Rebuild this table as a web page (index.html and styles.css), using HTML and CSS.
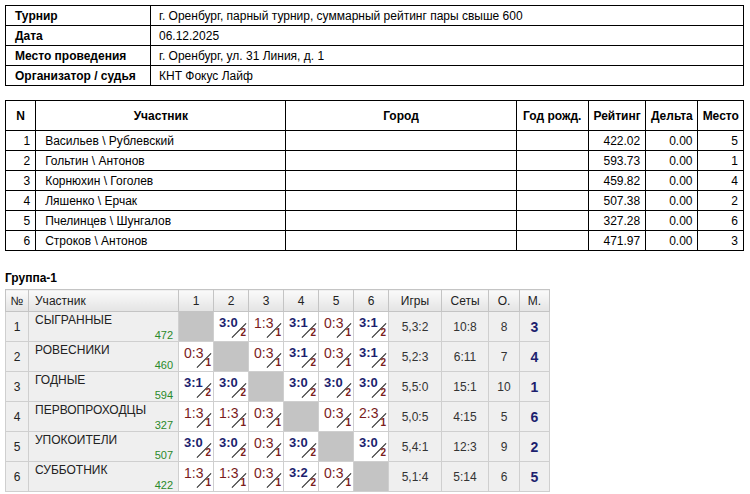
FILE: index.html
```html
<!DOCTYPE html>
<html lang="ru">
<head>
<meta charset="utf-8">
<title>Турнир</title>
<link rel="stylesheet" href="styles.css">
</head>
<body>
<table class="info">
  <tr><td class="lbl">Турнир</td><td>г. Оренбург, парный турнир, суммарный рейтинг пары свыше 600</td></tr>
  <tr><td class="lbl">Дата</td><td>06.12.2025</td></tr>
  <tr><td class="lbl">Место проведения</td><td>г. Оренбург, ул. 31 Линия, д. 1</td></tr>
  <tr><td class="lbl">Организатор / судья</td><td>КНТ Фокус Лайф</td></tr>
</table>

<table class="parts">
  <colgroup>
    <col class="c-n"><col class="c-name"><col class="c-city"><col class="c-year"><col class="c-rat"><col class="c-delta"><col class="c-place">
  </colgroup>
  <tr class="head"><th>N</th><th>Участник</th><th>Город</th><th>Год рожд.</th><th>Рейтинг</th><th>Дельта</th><th>Место</th></tr>
  <tr><td class="r">1</td><td>Васильев \ Рублевский</td><td></td><td></td><td class="r">422.02</td><td class="r">0.00</td><td class="r">5</td></tr>
  <tr><td class="r">2</td><td>Гольтин \ Антонов</td><td></td><td></td><td class="r">593.73</td><td class="r">0.00</td><td class="r">1</td></tr>
  <tr><td class="r">3</td><td>Корнюхин \ Гоголев</td><td></td><td></td><td class="r">459.82</td><td class="r">0.00</td><td class="r">4</td></tr>
  <tr><td class="r">4</td><td>Ляшенко \ Ерчак</td><td></td><td></td><td class="r">507.38</td><td class="r">0.00</td><td class="r">2</td></tr>
  <tr><td class="r">5</td><td>Пчелинцев \ Шунгалов</td><td></td><td></td><td class="r">327.28</td><td class="r">0.00</td><td class="r">6</td></tr>
  <tr><td class="r">6</td><td>Строков \ Антонов</td><td></td><td></td><td class="r">471.97</td><td class="r">0.00</td><td class="r">3</td></tr>
</table>

<div class="gtitle">Группа-1</div>
<table class="grid">
  <colgroup>
    <col class="g-n"><col class="g-name">
    <col class="g-s"><col class="g-s"><col class="g-s"><col class="g-s"><col class="g-s"><col class="g-s">
    <col class="g-games"><col class="g-sets"><col class="g-pts"><col class="g-pl">
  </colgroup>
  <tr class="ghead"><th>№</th><th class="left">Участник</th><th>1</th><th>2</th><th>3</th><th>4</th><th>5</th><th>6</th><th>Игры</th><th>Сеты</th><th>О.</th><th>М.</th></tr>
  <tr>
    <td class="idx">1</td>
    <td class="team"><div class="tname">СЫГРАННЫЕ</div><div class="trat">472</div></td>
    <td class="self"></td>
    <td class="sc win"><span class="res">3:0</span><span class="sl"></span><span class="pt">2</span></td>
    <td class="sc loss"><span class="res">1:3</span><span class="sl"></span><span class="pt">1</span></td>
    <td class="sc win"><span class="res">3:1</span><span class="sl"></span><span class="pt">2</span></td>
    <td class="sc loss"><span class="res">0:3</span><span class="sl"></span><span class="pt">1</span></td>
    <td class="sc win"><span class="res">3:1</span><span class="sl"></span><span class="pt">2</span></td>
    <td class="st">5,3:2</td><td class="st">10:8</td><td class="st">8</td><td class="st pl">3</td>
  </tr>
  <tr>
    <td class="idx">2</td>
    <td class="team"><div class="tname">РОВЕСНИКИ</div><div class="trat">460</div></td>
    <td class="sc loss"><span class="res">0:3</span><span class="sl"></span><span class="pt">1</span></td>
    <td class="self"></td>
    <td class="sc loss"><span class="res">0:3</span><span class="sl"></span><span class="pt">1</span></td>
    <td class="sc win"><span class="res">3:1</span><span class="sl"></span><span class="pt">2</span></td>
    <td class="sc loss"><span class="res">0:3</span><span class="sl"></span><span class="pt">1</span></td>
    <td class="sc win"><span class="res">3:1</span><span class="sl"></span><span class="pt">2</span></td>
    <td class="st">5,2:3</td><td class="st">6:11</td><td class="st">7</td><td class="st pl">4</td>
  </tr>
  <tr>
    <td class="idx">3</td>
    <td class="team"><div class="tname">ГОДНЫЕ</div><div class="trat">594</div></td>
    <td class="sc win"><span class="res">3:1</span><span class="sl"></span><span class="pt">2</span></td>
    <td class="sc win"><span class="res">3:0</span><span class="sl"></span><span class="pt">2</span></td>
    <td class="self"></td>
    <td class="sc win"><span class="res">3:0</span><span class="sl"></span><span class="pt">2</span></td>
    <td class="sc win"><span class="res">3:0</span><span class="sl"></span><span class="pt">2</span></td>
    <td class="sc win"><span class="res">3:0</span><span class="sl"></span><span class="pt">2</span></td>
    <td class="st">5,5:0</td><td class="st">15:1</td><td class="st">10</td><td class="st pl">1</td>
  </tr>
  <tr>
    <td class="idx">4</td>
    <td class="team"><div class="tname">ПЕРВОПРОХОДЦЫ</div><div class="trat">327</div></td>
    <td class="sc loss"><span class="res">1:3</span><span class="sl"></span><span class="pt">1</span></td>
    <td class="sc loss"><span class="res">1:3</span><span class="sl"></span><span class="pt">1</span></td>
    <td class="sc loss"><span class="res">0:3</span><span class="sl"></span><span class="pt">1</span></td>
    <td class="self"></td>
    <td class="sc loss"><span class="res">0:3</span><span class="sl"></span><span class="pt">1</span></td>
    <td class="sc loss"><span class="res">2:3</span><span class="sl"></span><span class="pt">1</span></td>
    <td class="st">5,0:5</td><td class="st">4:15</td><td class="st">5</td><td class="st pl">6</td>
  </tr>
  <tr>
    <td class="idx">5</td>
    <td class="team"><div class="tname">УПОКОИТЕЛИ</div><div class="trat">507</div></td>
    <td class="sc win"><span class="res">3:0</span><span class="sl"></span><span class="pt">2</span></td>
    <td class="sc win"><span class="res">3:0</span><span class="sl"></span><span class="pt">2</span></td>
    <td class="sc loss"><span class="res">0:3</span><span class="sl"></span><span class="pt">1</span></td>
    <td class="sc win"><span class="res">3:0</span><span class="sl"></span><span class="pt">2</span></td>
    <td class="self"></td>
    <td class="sc win"><span class="res">3:0</span><span class="sl"></span><span class="pt">2</span></td>
    <td class="st">5,4:1</td><td class="st">12:3</td><td class="st">9</td><td class="st pl">2</td>
  </tr>
  <tr>
    <td class="idx">6</td>
    <td class="team"><div class="tname">СУББОТНИК</div><div class="trat">422</div></td>
    <td class="sc loss"><span class="res">1:3</span><span class="sl"></span><span class="pt">1</span></td>
    <td class="sc loss"><span class="res">1:3</span><span class="sl"></span><span class="pt">1</span></td>
    <td class="sc loss"><span class="res">0:3</span><span class="sl"></span><span class="pt">1</span></td>
    <td class="sc win"><span class="res">3:2</span><span class="sl"></span><span class="pt">2</span></td>
    <td class="sc loss"><span class="res">0:3</span><span class="sl"></span><span class="pt">1</span></td>
    <td class="self"></td>
    <td class="st">5,1:4</td><td class="st">5:14</td><td class="st">6</td><td class="st pl">5</td>
  </tr>
</table>
</body>
</html>
```

FILE: styles.css
```css
html, body { margin: 0; padding: 0; background: #fff; }
body {
  padding: 5px;
  font-family: "Liberation Sans", Arial, sans-serif;
  font-size: 12px;
  color: #000;
}
table { border-collapse: collapse; }

/* info table */
.info { width: 739px; border: 1px solid #000; }
.info td {
  border: 1px solid #000;
  height: 19px;
  padding: 0 6px 0 8px;
  line-height: 14px;
  vertical-align: middle;
}
.info td.lbl { width: 129px; font-weight: bold; padding-left: 9px; padding-right: 6px; }

/* participants */
.parts { width: 739px; margin-top: 14px; border: 1px solid #000; }
.parts td, .parts th {
  border: 1px solid #000;
  height: 19px;
  padding: 0 5px 0 9px;
  line-height: 14px;
  vertical-align: middle;
  text-align: left;
}
.parts .head th { height: 29px; font-weight: bold; text-align: center; padding: 0 4px; }
.parts td.r { text-align: right; padding: 0 5px 0 2px; }
.c-n { width: 30px; }
.c-name { width: 249px; }
.c-city { width: 229px; }
.c-year { width: 72px; }
.c-rat { width: 57px; }
.c-delta { width: 52px; }
.c-place { width: 44px; }

/* group */
.gtitle { font-weight: bold; margin-top: 19px; line-height: 16px; height: 16px; }
.grid {
  margin-top: 3px;
  width: 545px;
  border: 1px solid #a8a8a8;
  color: #222;
}
.grid th, .grid td { border: 1px solid #cfcfcf; padding: 0; }
.ghead th {
  height: 21px;
  font-weight: normal;
  text-align: center;
  background: linear-gradient(#fafafa, #e4e4e4);
  border-color: #c4c4c4;
  color: #222;
}
.ghead th.left { text-align: left; padding-left: 6px; }
.g-n { width: 23px; }
.g-name { width: 150px; }
.g-s { width: 35px; }
.g-games { width: 53px; }
.g-sets { width: 47px; }
.g-pts { width: 31px; }
.g-pl { width: 30px; }

.grid tr td { height: 29px; }
.idx { background: #efefef; text-align: center; }
.team { background: #efefef; vertical-align: top; padding: 0 5px 0 6px !important; }
.tname { line-height: 14px; margin-top: 1px; }
.trat { text-align: right; font-size: 11px; line-height: 12px; color: #2a8a2a; margin-top: 2px; }
.self { background: #c4c4c4; }
.sc { position: relative; background: #fff; vertical-align: top; }
.sc .res { display: block; padding: 4px 0 0 5px; line-height: 14px; font-size: 13px; }
.win .res { font-weight: bold; color: #1d1f6e; }
.loss .res { font-size: 14px; color: #7a1c1c; }
.sc .sl {
  position: absolute;
  left: 15px;
  top: 18px;
  width: 20px;
  height: 1px;
  background: #222;
  transform: rotate(-45deg);
  transform-origin: center;
}
.sc .pt {
  position: absolute;
  right: 2px;
  bottom: 3px;
  font-size: 10px;
  line-height: 10px;
  font-weight: bold;
  color: #7a1c1c;
}
.st { background: #efefef; text-align: center; color: #333; }
.st.pl { font-weight: bold; font-size: 14px; color: #1d1f6e; }
```
